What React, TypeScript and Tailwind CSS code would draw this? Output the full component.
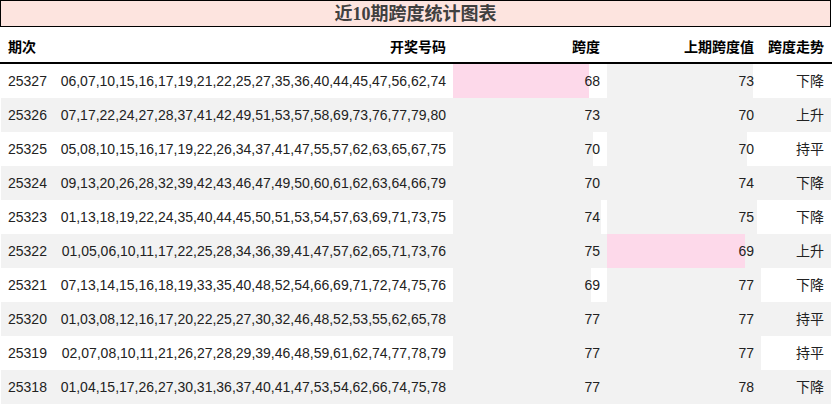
import React from "react";

interface Row {
  issue: string;
  numbers: string;
  span: number;
  prevSpan: number;
  trend: string;
}

const rows: Row[] = [
  { issue: "25327", numbers: "06,07,10,15,16,17,19,21,22,25,27,35,36,40,44,45,47,56,62,74", span: 68, prevSpan: 73, trend: "下降" },
  { issue: "25326", numbers: "07,17,22,24,27,28,37,41,42,49,51,53,57,58,69,73,76,77,79,80", span: 73, prevSpan: 70, trend: "上升" },
  { issue: "25325", numbers: "05,08,10,15,16,17,19,22,26,34,37,41,47,55,57,62,63,65,67,75", span: 70, prevSpan: 70, trend: "持平" },
  { issue: "25324", numbers: "09,13,20,26,28,32,39,42,43,46,47,49,50,60,61,62,63,64,66,79", span: 70, prevSpan: 74, trend: "下降" },
  { issue: "25323", numbers: "01,13,18,19,22,24,35,40,44,45,50,51,53,54,57,63,69,71,73,75", span: 74, prevSpan: 75, trend: "下降" },
  { issue: "25322", numbers: "01,05,06,10,11,17,22,25,28,34,36,39,41,47,57,62,65,71,73,76", span: 75, prevSpan: 69, trend: "上升" },
  { issue: "25321", numbers: "07,13,14,15,16,18,19,33,35,40,48,52,54,66,69,71,72,74,75,76", span: 69, prevSpan: 77, trend: "下降" },
  { issue: "25320", numbers: "01,03,08,12,16,17,20,22,25,27,30,32,46,48,52,53,55,62,65,78", span: 77, prevSpan: 77, trend: "持平" },
  { issue: "25319", numbers: "02,07,08,10,11,21,26,27,28,29,39,46,48,59,61,62,74,77,78,79", span: 77, prevSpan: 77, trend: "持平" },
  { issue: "25318", numbers: "01,04,15,17,26,27,30,31,36,37,40,41,47,53,54,62,66,74,75,78", span: 77, prevSpan: 78, trend: "下降" },
];

const minSpan = Math.min(...rows.map((r) => r.span));
const minPrev = Math.min(...rows.map((r) => r.prevSpan));

// data bar cell: 2px per unit, pink for the column minimum
function BarCell({ value, min, width, pr }: { value: number; min: boolean; width: string; pr: string }) {
  return (
    <div className={`relative h-full ${width}`}>
      <div
        className={`absolute inset-y-0 left-0 ${min ? "bg-[#fdd9ea]" : "bg-[#f2f2f2]"}`}
        style={{ width: value * 2 }}
      />
      <div className={`relative flex h-full items-center justify-end ${pr}`}>{value}</div>
    </div>
  );
}

export default function App() {
  return (
    <div className="w-[832px] h-[405px] bg-white text-[14px] text-[#222]" style={{ fontFamily: '"Liberation Sans", "Noto Sans CJK SC", sans-serif' }}>
      {/* 标题 */}
      <div className="w-[831px] h-[27px] border border-black bg-[#fde4df] flex items-center justify-center">
        <span
          className="text-[18px] font-bold text-[#404040] leading-none"
          style={{ fontFamily: '"Liberation Serif", "Noto Sans CJK SC", serif' }}
        >
          近10期跨度统计图表
        </span>
      </div>

      {/* 表头 */}
      <div className="flex h-[37px] pt-[6px] border-b-2 border-black font-bold text-black">
        <div className="w-[55px] flex items-center pl-[8px]">期次</div>
        <div className="w-[398px] flex items-center justify-end pr-[7px]">开奖号码</div>
        <div className="w-[154px] flex items-center justify-end pr-[7px]">跨度</div>
        <div className="w-[155px] flex items-center justify-end pr-[8px]">上期跨度值</div>
        <div className="w-[69px] flex items-center justify-end pr-[7px]">跨度走势</div>
      </div>

      {/* 数据 */}
      <div className="pl-px">
        {rows.map((r, i) => (
          <div key={r.issue} className={`flex h-[34px] w-[830px] ${i % 2 === 1 ? "bg-[#f2f2f2]" : "bg-white"}`}>
            <div className="w-[54px] flex items-center pl-[7px]">{r.issue}</div>
            <div className="w-[398px] flex items-center justify-end pr-[7px] whitespace-nowrap">{r.numbers}</div>
            <BarCell value={r.span} min={r.span === minSpan} width="w-[154px]" pr="pr-[7px]" />
            <BarCell value={r.prevSpan} min={r.prevSpan === minPrev} width="w-[155px]" pr="pr-[8px]" />
            <div className="w-[69px] flex items-center justify-end pr-[7px]">{r.trend}</div>
          </div>
        ))}
      </div>
    </div>
  );
}
